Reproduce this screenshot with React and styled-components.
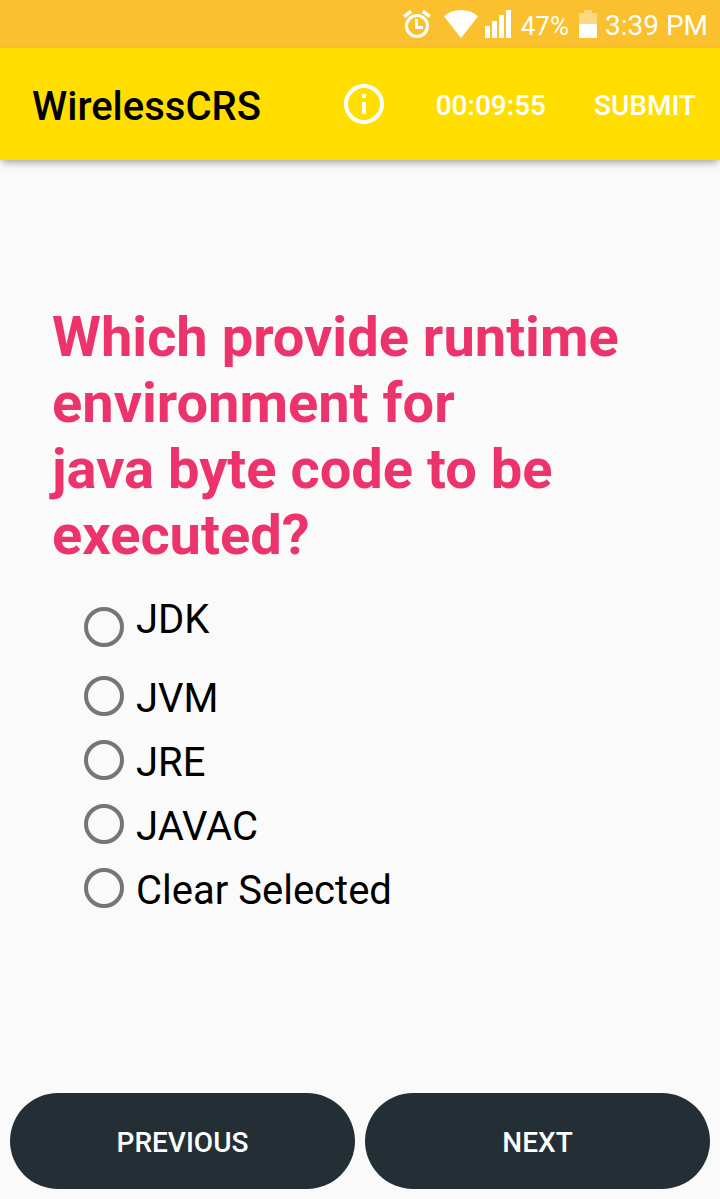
import React, { useState } from "react";
import styled, { createGlobalStyle } from "styled-components";

const GlobalStyle = createGlobalStyle`
  *, *::before, *::after { box-sizing: border-box; }
  body {
    margin: 0;
    background: #fafafa;
    color: #000;
    font-family: Roboto, "Liberation Sans", sans-serif;
  }
`;

const Screen = styled.div`
  display: flex;
  flex-direction: column;
  min-height: 100vh;
`;

const StatusBar = styled.div`
  display: flex;
  align-items: center;
  justify-content: flex-end;
  height: 48px;
  padding-right: 12px;
  background: #fbc02d;
  color: #fff;
`;

const StatusIcon = styled.svg`
  display: block;
  flex: none;
  height: 28px;
  width: ${(p) => p.$width}px;
  margin-right: ${(p) => p.$gap}px;
  fill: #fff;
`;

const StatusText = styled.span`
  padding-top: 4px;
  font-size: ${(p) => p.$size}px;
  line-height: 34px;
  margin-right: ${(p) => p.$gap || 0}px;
`;

const AppBar = styled.header`
  display: flex;
  align-items: center;
  height: 112px;
  padding: 0 24px 0 32px;
  background: #ffde00;
  box-shadow: 0 4px 8px -2px rgba(0, 0, 0, 0.4);
`;

const AppTitle = styled.h1`
  flex: 1;
  margin: 0;
  padding-top: 6px;
  font-size: 40px;
  line-height: 48px;
  font-weight: 500;
`;

const Actions = styled.div`
  display: flex;
  align-items: center;
  gap: 48px;
  color: #fff;
  font-size: 28px;
  line-height: 34px;
  font-weight: 500;
`;

const InfoButton = styled.button`
  display: flex;
  padding: 0;
  border: 0;
  background: none;

  svg { display: block; fill: #fff; }
`;

const Timer = styled.time`
  padding-top: 4px;
`;

const SubmitButton = styled.button`
  padding: 4px 0 0;
  border: 0;
  background: none;
  color: inherit;
  font: inherit;
`;

const Quiz = styled.main`
  flex: 1;
  padding: 144px 52px 32px;
`;

const Question = styled.h2`
  margin: 0;
  color: #ec336b;
  font-size: 56px;
  line-height: 66px;
  font-weight: 700;
`;

const Options = styled.div`
  display: flex;
  flex-direction: column;
  padding: 22px 32px 0;
`;

const Option = styled.label`
  display: flex;
  align-items: center;
  gap: 12px;
  height: ${(p) => (p.$lead ? 74 : 64)}px;
  font-size: 40px;
  line-height: 48px;

  span {
    padding-top: ${(p) => (p.$lead ? 0 : 6)}px;
    padding-bottom: ${(p) => (p.$lead ? 14 : 0)}px;
  }
`;

const Radio = styled.input`
  appearance: none;
  flex: none;
  width: 40px;
  height: 40px;
  margin: 0;
  border: 4px solid #757575;
  border-radius: 50%;

  &:checked {
    border-color: #ec336b;
    background: radial-gradient(circle, #ec336b 10px, transparent 11px);
  }
`;

const Footer = styled.footer`
  display: flex;
  gap: 10px;
  padding: 10px;
`;

const NavButton = styled.button`
  flex: 1;
  height: 96px;
  padding: 4px 0 0;
  border: 0;
  border-radius: 50px;
  background: #242f35;
  color: #fff;
  font-family: inherit;
  font-size: 28px;
  line-height: 34px;
  font-weight: 500;
`;

const answers = ["JDK", "JVM", "JRE", "JAVAC", "Clear Selected"];

export default function App() {
  const [selected, setSelected] = useState(null);
  const choose = (answer) =>
    setSelected(answer === "Clear Selected" ? null : answer);

  return (
    <Screen>
      <GlobalStyle />
      <StatusBar>
        <StatusIcon viewBox="0 0 28 28" $width={28} $gap={13} aria-hidden="true">
          <circle cx="14" cy="16" r="10.5" fill="none" stroke="#fff" strokeWidth="3" />
          <path d="M1.200 6.600 8.200 1.200M26.800 6.600 19.800 1.200" fill="none" stroke="#fff" strokeWidth="3.6" />
          <path d="M13.500 9V17.500H20" fill="none" stroke="#fff" strokeWidth="3" />
        </StatusIcon>
        <StatusIcon viewBox="0 0 34 28" $width={34} $gap={7} aria-hidden="true">
          <path d="M0 6.200C4.800 2.200 10.600 0 17 0S29.200 2.200 34 6.200L17 28Z" />
        </StatusIcon>
        <StatusIcon viewBox="0 0 26 28" $width={26} $gap={10} aria-hidden="true">
          <path d="M0 16h5v12H0zM7 11h5v17H7zM14 5h5v23h-5zM21 0h5v28h-5z" />
        </StatusIcon>
        <StatusText $size={26} $gap={10}>47%</StatusText>
        <StatusIcon viewBox="0 0 18 28" $width={18} $gap={8} aria-hidden="true">
          <path d="M5 0h8v3h5v11H0V3h5z" fillOpacity="0.4" />
          <path d="M0 14h18v14H0z" />
        </StatusIcon>
        <StatusText $size={28}>3:39 PM</StatusText>
      </StatusBar>

      <AppBar>
        <AppTitle>WirelessCRS</AppTitle>
        <Actions>
          <InfoButton type="button" aria-label="Information">
            <svg width="48" height="48" viewBox="0 0 24 24" aria-hidden="true">
              <path d="M11 17h2v-6h-2v6zm1-15C6.480 2 2 6.480 2 12s4.480 10 10 10 10-4.480 10-10S17.520 2 12 2zm0 18c-4.410 0-8-3.590-8-8s3.590-8 8-8 8 3.590 8 8-3.590 8-8 8zM11 9h2V7h-2v2z" />
            </svg>
          </InfoButton>
          <Timer>00:09:55</Timer>
          <SubmitButton type="button">SUBMIT</SubmitButton>
        </Actions>
      </AppBar>

      <Quiz>
        <Question id="question">
          Which provide runtime environment for
          <br />
          java byte code to be executed?
        </Question>
        <Options role="radiogroup" aria-labelledby="question">
          {answers.map((answer, i) => (
            <Option key={answer} $lead={i === 0}>
              <Radio
                type="radio"
                name="answer"
                checked={selected === answer}
                onChange={() => choose(answer)}
              />
              <span>{answer}</span>
            </Option>
          ))}
        </Options>
      </Quiz>

      <Footer>
        <NavButton type="button">PREVIOUS</NavButton>
        <NavButton type="button">NEXT</NavButton>
      </Footer>
    </Screen>
  );
}
